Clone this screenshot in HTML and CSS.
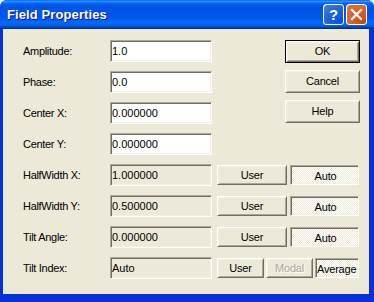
FILE: index.html
```html
<!DOCTYPE html>
<html lang="en">
<head>
    <meta charset="UTF-8">
    <title>Field Properties</title>
    <link rel="stylesheet" href="styles.css">
</head>
<body>
<div class="window">
    <div class="titlebar">
        <span class="title">Field Properties</span>
        <span class="tbtn help">?</span>
        <span class="tbtn close">
            <svg width="19" height="19" viewBox="0 0 19 19"><path d="M5 5L14 14M14 5L5 14" stroke="#fff" stroke-width="2.2" stroke-linecap="square"/></svg>
        </span>
    </div>
    <div class="client">
        <label class="lbl">Amplitude:</label>
        <input class="fld" type="text" value="1.0">
        <div class="actions">
            <button class="btn def">OK</button>
            <button class="btn">Cancel</button>
            <button class="btn">Help</button>
        </div>

        <label class="lbl">Phase:</label>
        <input class="fld" type="text" value="0.0">

        <label class="lbl">Center X:</label>
        <input class="fld" type="text" value="0.000000">

        <label class="lbl">Center Y:</label>
        <input class="fld" type="text" value="0.000000">

        <label class="lbl">HalfWidth X:</label>
        <input class="fld ro" type="text" value="1.000000" readonly>
        <div class="pair">
            <button class="btn">User</button>
            <button class="btn on">Auto</button>
        </div>

        <label class="lbl">HalfWidth Y:</label>
        <input class="fld ro" type="text" value="0.500000" readonly>
        <div class="pair">
            <button class="btn">User</button>
            <button class="btn on">Auto</button>
        </div>

        <label class="lbl">Tilt Angle:</label>
        <input class="fld ro" type="text" value="0.000000" readonly>
        <div class="pair">
            <button class="btn">User</button>
            <button class="btn on">Auto</button>
        </div>

        <label class="lbl">Tilt Index:</label>
        <input class="fld ro" type="text" value="Auto" readonly>
        <div class="pair three">
            <button class="btn">User</button>
            <button class="btn" disabled>Modal</button>
            <button class="btn on left">Average</button>
        </div>
    </div>
</div>
</body>
</html>
```

FILE: styles.css
```css
body {
    margin: 0;
    background: #fff;
    font-family: "Liberation Sans", Arial, sans-serif;
    font-size: 11px;
}
.window {
    display: flex;
    flex-direction: column;
    width: 374px;
    height: 302px;
    background: #0831d9;
    border-radius: 7px 7px 0 0;
    overflow: hidden;
}
.titlebar {
    display: flex;
    align-items: center;
    height: 29px;
    padding: 0 7px 0 7px;
    background: linear-gradient(#0058ee 0%, #3a93ff 4%, #288eff 6%, #127dff 8%, #036ffc 10%, #0262ee 14%, #0057e5 20%, #0054e3 24%, #0055eb 56%, #005bf5 66%, #026afe 76%, #0062ef 86%, #0052d6 92%, #0040ab 94%, #003092 100%);
    box-sizing: border-box;
}
.title {
    flex: 1;
    color: #fff;
    font-weight: bold;
    font-size: 13px;
    letter-spacing: 0.1px;
    text-shadow: 1px 1px #0f1089;
}
.tbtn {
    display: flex;
    align-items: center;
    justify-content: center;
    width: 21px;
    height: 21px;
    margin-left: 2px;
    box-sizing: border-box;
    border: 1px solid #fff;
    border-radius: 3px;
    color: #fff;
}
.help {
    background: radial-gradient(circle at 90% 90%, #0054e9 0%, #2263d5 55%, #4479e4 90%, #fff 100%);
    font: bold 15px "Liberation Sans", Arial, sans-serif;
}
.close {
    background: radial-gradient(circle at 90% 90%, #cc4600 0%, #dc6527 55%, #cd7546 90%, #fff 100%);
}
.client {
    flex: 1;
    display: grid;
    grid-template-columns: 82px 102px 143px;
    grid-auto-rows: 22px;
    column-gap: 5px;
    row-gap: 9px;
    align-content: start;
    margin: 0 5px 8px 3px;
    padding: 11px 0 0 20px;
    background: #ece9d8;
}
.lbl {
    grid-column: 1;
    align-self: center;
    letter-spacing: -0.3px;
    line-height: 13px;
}
.fld {
    grid-column: 2;
    box-sizing: border-box;
    width: 102px;
    height: 22px;
    margin: 0;
    padding: 3px 1px 4px 1px;
    border: 1px solid;
    border-color: #aca899 #fff #fff #aca899;
    box-shadow: inset 1px 1px #716f64, inset -1px -1px #f1efe2;
    background: #fff;
    font: 11px/13px "Liberation Sans", Arial, sans-serif;
    color: #000;
    outline: none;
}
.fld.ro {
    background: #ece9d8;
}
.actions {
    grid-column: 3;
    grid-row: 1 / span 3;
    display: flex;
    flex-direction: column;
    align-items: flex-end;
    gap: 7px;
}
.actions .btn {
    width: 75px;
    height: 23px;
}
.pair {
    grid-column: 3;
    display: grid;
    grid-template-columns: 70px 69px;
    gap: 3px;
    height: 20px;
    align-self: center;
}
.pair.three {
    grid-template-columns: 47px 47px 44px;
    gap: 2px;
}
.btn {
    box-sizing: border-box;
    margin: 0;
    padding: 0 0 1px;
    border: 1px solid;
    border-color: #fff #716f64 #716f64 #fff;
    box-shadow: inset 1px 1px #f1efe2, inset -1px -1px #aca899;
    background: #ece9d8;
    font: 11px "Liberation Sans", Arial, sans-serif;
    letter-spacing: -0.2px;
    color: #000;
}
.btn.def {
    border-color: #000;
    box-shadow: inset 1px 1px #fff, inset -1px -1px #716f64, inset 2px 2px #f1efe2, inset -2px -2px #aca899;
}
.btn.on {
    padding: 1px 0 0 2px;
    border-color: #aca899 #fff #fff #aca899;
    box-shadow: inset 1px 1px #716f64, inset -1px -1px #f1efe2;
    background: repeating-conic-gradient(#fff 0 25%, #ece9d8 0 50%) 0 0 / 2px 2px;
}
.btn.left {
    text-align: left;
    padding-left: 1px;
    overflow: hidden;
}
.btn:disabled {
    color: #aca899;
    text-shadow: 1px 1px #fff;
}
```
